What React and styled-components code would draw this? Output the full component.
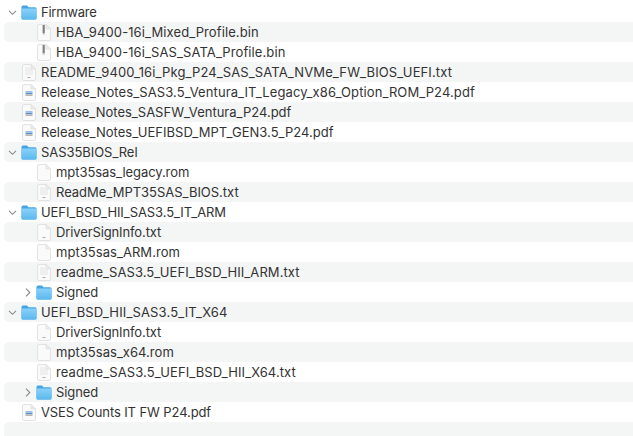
import React from "react";
import styled, { createGlobalStyle } from "styled-components";

const Global = createGlobalStyle`
  html, body { margin: 0; padding: 0; background: #fff; height: 100%; overflow: hidden; }
`;

const List = styled.div`
  display: flex;
  flex-direction: column;
  height: 436px;
  overflow: hidden;
  padding: 2px 0 0 4px;
  box-sizing: border-box;
  font-family: Inter, "Liberation Sans", sans-serif;
  font-size: 13px;
  color: #333;
`;

const Row = styled.div`
  flex: 0 0 20px;
  height: 20px;
  display: flex;
  align-items: center;
  border-radius: 5px 0 0 5px;
  padding-left: ${(p) => p.$level * 15}px;
  background: ${(p) => (p.$striped ? "#f4f5f5" : "transparent")};
`;

const Disclosure = styled.span`
  flex: 0 0 17px;
  width: 17px;
  height: 20px;
  display: flex;
  align-items: center;
  justify-content: flex-end;
  padding-right: 4px;
  box-sizing: border-box;
`;

const IconSlot = styled.span`
  flex: 0 0 16px;
  width: 16px;
  height: 20px;
  display: flex;
  align-items: center;
  justify-content: center;
`;

const Name = styled.span`
  margin-left: 4px;
  white-space: nowrap;
  letter-spacing: ${(p) => p.$track}px;
`;

const Chevron = ({ open }) => (
  <svg width="9" height="9" viewBox="0 0 9 9" fill="none" stroke="#8a8a8a" strokeWidth="1.1">
    {open ? <path d="M1 2.8 L4.5 6.3 L8 2.8" /> : <path d="M3 .7 L6.8 4.5 L3 8.3" />}
  </svg>
);

const Folder = () => (
  <svg width="16" height="15" viewBox="0 0 16 15">
    <defs>
      <linearGradient id="fg" x1="0" y1="0" x2="0" y2="1">
        <stop offset="0" stopColor="#8ad1f8" />
        <stop offset="1" stopColor="#5ab8ef" />
      </linearGradient>
    </defs>
    <path d="M.5 2 Q.5 .5 2 .5 H6 L7.5 2.2 H14 Q15.5 2.2 15.5 3.7 V13 Q15.5 14.5 14 14.5 H2 Q.5 14.5 .5 13 Z" fill="#45a5e3" />
    <rect x=".5" y="3.4" width="15" height="11.1" rx="1.3" fill="url(#fg)" />
  </svg>
);

const Sheet = ({ children }) => (
  <svg width="14" height="17" viewBox="0 0 14 17">
    <path d="M2 .5 H9 L13.5 5 V15 Q13.5 16.5 12 16.5 H2 Q.5 16.5 .5 15 V2 Q.5 .5 2 .5 Z" fill="#fafafa" stroke="#e2e2e2" />
    <path d="M9 .5 V5 H13.5 Z" fill="#ececec" stroke="#dcdcdc" strokeWidth=".6" />
    {children}
  </svg>
);

const Doc = ({ kind }) => {
  if (kind === "bin")
    return (
      <Sheet>
        <rect x="5.6" y="1" width="2.2" height="8" fill="#808080" />
        <rect x="5.6" y="9" width="2.2" height="1.6" fill="#c4c4c4" />
      </Sheet>
    );
  if (kind === "pdf")
    return (
      <Sheet>
        <rect x="3.5" y="7" width="7" height="1.3" fill="#9ec0e8" />
        <rect x="3.5" y="8.6" width="7" height="1.5" fill="#5d8fd0" />
        <rect x="3.5" y="10.6" width="7" height="1" fill="#8a8a8a" />
      </Sheet>
    );
  if (kind === "txt")
    return (
      <Sheet>
        <rect x="5.5" y="13" width="3" height="1" fill="#aaa" />
      </Sheet>
    );
  if (kind === "readme")
    return (
      <Sheet>
        <path d="M3 4 H8 M3 6 H11 M3 8 H11 M3 10 H11" stroke="#dedede" strokeWidth=".8" />
        <rect x="5.5" y="13" width="3" height="1" fill="#aaa" />
      </Sheet>
    );
  return <Sheet />;
};

const rows = [
  [0, "folder-open", "Firmware", -0.25],
  [1, "bin", "HBA_9400-16i_Mixed_Profile.bin", 0.1],
  [1, "bin", "HBA_9400-16i_SAS_SATA_Profile.bin", 0.1],
  [0, "readme", "README_9400_16i_Pkg_P24_SAS_SATA_NVMe_FW_BIOS_UEFI.txt", 0.12],
  [0, "pdf", "Release_Notes_SAS3.5_Ventura_IT_Legacy_x86_Option_ROM_P24.pdf", 0.1],
  [0, "pdf", "Release_Notes_SASFW_Ventura_P24.pdf", 0],
  [0, "pdf", "Release_Notes_UEFIBSD_MPT_GEN3.5_P24.pdf", 0.03],
  [0, "folder-open", "SAS35BIOS_Rel", -0.05],
  [1, "rom", "mpt35sas_legacy.rom", -0.06],
  [1, "readme", "ReadMe_MPT35SAS_BIOS.txt", -0.02],
  [0, "folder-open", "UEFI_BSD_HII_SAS3.5_IT_ARM", -0.08],
  [1, "txt", "DriverSignInfo.txt", -0.12],
  [1, "rom", "mpt35sas_ARM.rom", 0.05],
  [1, "readme", "readme_SAS3.5_UEFI_BSD_HII_ARM.txt", 0.07],
  [1, "folder-closed", "Signed", -0.07],
  [0, "folder-open", "UEFI_BSD_HII_SAS3.5_IT_X64", 0.14],
  [1, "txt", "DriverSignInfo.txt", -0.12],
  [1, "rom", "mpt35sas_x64.rom", 0.04],
  [1, "readme", "readme_SAS3.5_UEFI_BSD_HII_X64.txt", 0.1],
  [1, "folder-closed", "Signed", -0.07],
  [0, "pdf", "VSES Counts IT FW P24.pdf", -0.1],
  [0, "empty", "", 0],
];

export default function App() {
  return (
    <>
      <Global />
      <List>
        {rows.map(([level, kind, name, track], i) => {
          const isFolder = kind.startsWith("folder");
          const open = kind === "folder-open";
          return (
            <Row key={i} $level={level} $striped={i % 2 === 1}>
              {kind !== "empty" && (
                <>
                  <Disclosure>{isFolder && <Chevron open={open} />}</Disclosure>
                  <IconSlot>{isFolder ? <Folder /> : <Doc kind={kind} />}</IconSlot>
                  <Name $track={track}>{name}</Name>
                </>
              )}
            </Row>
          );
        })}
      </List>
    </>
  );
}
